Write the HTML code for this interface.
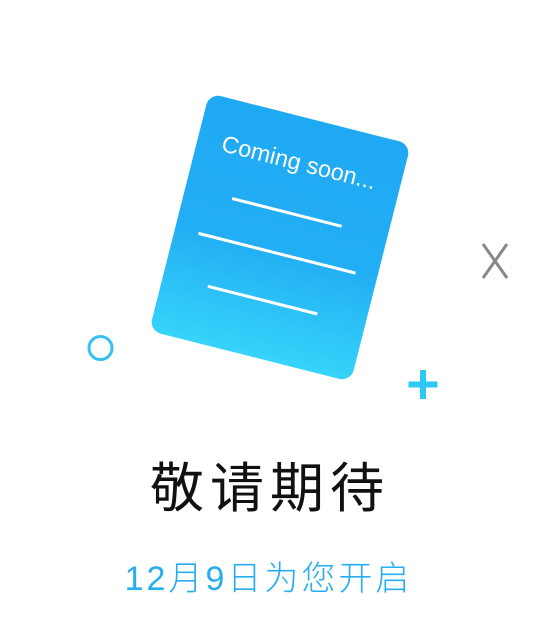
<!DOCTYPE html>
<html><head><meta charset="utf-8"><style>
html,body{margin:0;padding:0;background:#fff;width:534px;height:632px;overflow:hidden;position:relative}
.card{position:absolute;left:176px;top:114.5px;width:208px;height:245px;border-radius:12px;transform:rotate(14.2deg);background:linear-gradient(#1fa9f3 0%,#22aef4 55%,#36d3fa 100%)}
.t{position:absolute;left:0;width:100%;text-align:center;color:#fff;font:23.5px "Liberation Sans",sans-serif;top:32px;white-space:nowrap}
.l{position:absolute;height:3px;background:#fff}
.title{position:absolute;left:0;width:534px;text-align:center;top:446px;font:400 54px "Noto Sans CJK SC",sans-serif;color:#111;letter-spacing:6px;text-indent:6px;line-height:76px}
.sub{position:absolute;left:0;width:534px;text-align:center;top:554px;font:300 34px "Liberation Sans","Noto Sans CJK SC",sans-serif;color:#27aef0;letter-spacing:3px;text-indent:3px;line-height:50px}
</style></head><body>
<div class="card">
<div class="t">Coming soon...</div>
<div class="l" style="left:47.5px;width:113px;top:94.5px"></div>
<div class="l" style="left:23.5px;width:162px;top:136.5px"></div>
<div class="l" style="left:45.5px;width:113px;top:185.5px"></div>
</div>
<svg width="534" height="632" style="position:absolute;left:0;top:0">
<circle cx="100.5" cy="348" r="11.5" fill="none" stroke="#33c3f2" stroke-width="3"/>
<path d="M423 370v29M408.5 384.5h29" stroke="#2ec8f5" stroke-width="6"/>
<path d="M483 244L507 278M507 244L483 278" stroke="#888" stroke-width="3"/>
</svg>
<div class="title">敬请期待</div>
<div class="sub">12月9日为您开启</div>
</body></html>
